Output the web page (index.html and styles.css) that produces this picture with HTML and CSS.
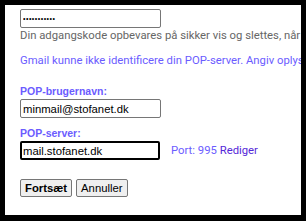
FILE: index.html
```html
<!DOCTYPE html>
<html lang="da">
<head>
    <meta charset="UTF-8">
    <title>POP-konto</title>
    <link rel="stylesheet" href="styles.css">
</head>
<body>
    <div class="frame">
        <div class="panel">
            <input class="field secret" type="password" value="hemmelig123">
            <p class="note">Din adgangskode opbevares på sikker vis og slettes, når vi har hentet din mail.</p>
            <p class="error">Gmail kunne ikke identificere din POP-server. Angiv oplysningerne nedenfor.</p>

            <div class="group">
                <label class="label">POP-brugernavn:</label>
                <input class="field" type="text" value="minmail@stofanet.dk">
            </div>

            <div class="group">
                <label class="label">POP-server:</label>
                <div class="row">
                    <input class="field focused" type="text" value="mail.stofanet.dk">
                    <span class="port">Port: 995 <a class="edit">Rediger</a></span>
                </div>
            </div>

            <div class="actions">
                <button class="btn primary">Fortsæt</button>
                <button class="btn">Annuller</button>
            </div>
        </div>
    </div>
</body>
</html>
```

FILE: styles.css
```css
body {
    margin: 0;
    background: #000;
    font-family: Roboto, Arial, sans-serif;
}
.frame {
    padding: 5px 5px 6px 5px;
    height: 210px;
}
.panel {
    background: #fff;
    height: 210px;
    padding: 4px 0 0 15px;
    box-sizing: border-box;
    overflow: hidden;
    white-space: nowrap;
}
.field {
    display: block;
    width: 141px;
    height: 19px;
    box-sizing: border-box;
    margin: 0;
    padding: 1px 2px;
    border: 1px solid #767676;
    border-radius: 2px;
    font-family: Arial, "Liberation Sans", sans-serif;
    font-size: 11.3px;
    color: #000;
    outline: none;
}
.field.secret {
    font-size: 7px;
    letter-spacing: 0.5px;
}
.field.focused {
    border: 2px solid #000;
    padding: 0 1px;
    width: 140px;
}
.note {
    margin: 0;
    font-size: 11.3px;
    line-height: 16px;
    color: #666;
}
.error {
    margin: 9px 0 0;
    font-size: 11.3px;
    line-height: 16px;
    color: #6b5cff;
}
.group {
    margin-top: 16px;
}
.group + .group {
    margin-top: 9px;
}
.label {
    display: block;
    margin-bottom: 1px;
    font-family: Arial, "Liberation Sans", sans-serif;
    font-weight: bold;
    font-size: 10.5px;
    line-height: 13px;
    color: #6b5cff;
}
.row {
    display: flex;
    align-items: center;
    gap: 11px;
}
.port {
    font-size: 11.3px;
    color: #6b5cff;
}
.edit {
    color: #5528d8;
    cursor: pointer;
}
.actions {
    margin-top: 19px;
    display: flex;
    gap: 4px;
}
.btn {
    font-family: Arial, "Liberation Sans", sans-serif;
    font-size: 11.3px;
    height: 18px;
    padding: 0 4px;
    border: 1px solid #767676;
    border-radius: 2px;
    background: #efefef;
    color: #000;
}
.btn.primary {
    font-weight: bold;
}
```
